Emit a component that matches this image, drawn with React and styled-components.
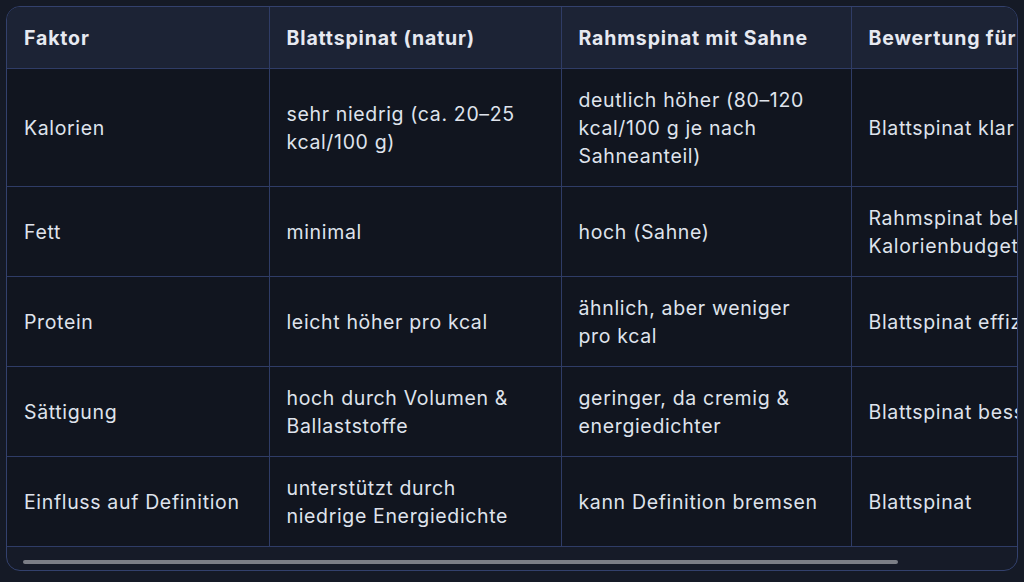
import * as React from 'react';
import styled, { createGlobalStyle } from 'styled-components';

const GlobalStyle = createGlobalStyle`
  html, body {
    margin: 0;
    background: #151a26;
  }
  body {
    font-family: 'Inter', 'Noto Sans', sans-serif;
    -webkit-font-smoothing: antialiased;
  }
`;

const Page = styled.div`
  padding: 6px 6px 0 6px;
`;

const Frame = styled.div`
  border: 1px solid #33416d;
  border-radius: 14px;
  overflow: hidden;
  background: #161b28;
`;

const Viewport = styled.div`
  overflow: hidden;
`;

const Table = styled.table`
  border-collapse: collapse;
  table-layout: fixed;
  width: 1129px;
  font-size: 19.5px;
  line-height: 28px;
  letter-spacing: 0.65px;
`;

const Cell = styled.td`
  padding: 17px 26px 16px 17px;
  vertical-align: middle;
  text-align: left;
  color: #dfe3ec;
  background: #11151f;
  border-right: 1px solid #2f3c66;
  border-bottom: 1px solid #2f3c66;
  white-space: ${(p) => (p.$clip ? 'nowrap' : 'normal')};

  &:last-child {
    border-right: none;
  }
`;

const HeadCell = styled(Cell).attrs({ as: 'th' })`
  background: #1c2335;
  font-weight: 700;
  letter-spacing: 0.85px;
  color: #e6e9f1;
`;

const ScrollBar = styled.div`
  height: 23px;
  padding: 13px 16px 0 16px;
  box-sizing: border-box;
`;

const Thumb = styled.div`
  height: 4px;
  border-radius: 2px;
  background: #7b7e86;
`;

const columns = [
  { label: 'Faktor', width: 262 },
  { label: 'Blattspinat (natur)', width: 292 },
  { label: 'Rahmspinat mit Sahne', width: 290 },
  { label: 'Bewertung für Definition', width: 285 },
];

const rows = [
  [
    'Kalorien',
    'sehr niedrig (ca. 20–25 kcal/100 g)',
    'deutlich höher (80–120 kcal/100 g je nach Sahneanteil)',
    'Blattspinat klar besser',
  ],
  [
    'Fett',
    'minimal',
    'hoch (Sahne)',
    'Rahmspinat belastet Kalorienbudget',
  ],
  [
    'Protein',
    'leicht höher pro kcal',
    'ähnlich, aber weniger pro kcal',
    'Blattspinat effizienter',
  ],
  [
    'Sättigung',
    'hoch durch Volumen & Ballaststoffe',
    'geringer, da cremig & energiedichter',
    'Blattspinat besser',
  ],
  [
    'Einfluss auf Definition',
    'unterstützt durch niedrige Energiedichte',
    'kann Definition bremsen',
    'Blattspinat',
  ],
];

const tableWidth = columns.reduce((sum, c) => sum + c.width, 0);
const viewWidth = 1010;

const App = () => {
  const thumbShare = (viewWidth / tableWidth) * 100;
  return (
    <Page>
      <GlobalStyle />
      <Frame>
        <Viewport>
          <Table>
            <colgroup>
              {columns.map((c) => (
                <col key={c.label} style={{ width: c.width }} />
              ))}
            </colgroup>
            <thead>
              <tr>
                {columns.map((c, i) => (
                  <HeadCell key={c.label} $clip={i === 3}>
                    {c.label}
                  </HeadCell>
                ))}
              </tr>
            </thead>
            <tbody>
              {rows.map((r, i) => (
                <tr key={i}>
                  {r.map((text, j) => (
                    <Cell key={j}>{text}</Cell>
                  ))}
                </tr>
              ))}
            </tbody>
          </Table>
        </Viewport>
        <ScrollBar>
          <Thumb style={{ width: `${thumbShare}%` }} />
        </ScrollBar>
      </Frame>
    </Page>
  );
};

export default App;
